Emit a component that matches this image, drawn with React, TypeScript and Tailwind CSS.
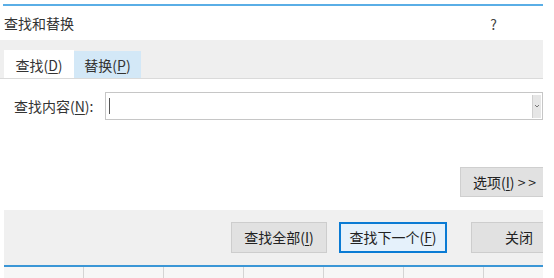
import React from 'react';

const font = { fontFamily: '"Microsoft YaHei", "Noto Sans CJK SC", "Noto Sans", sans-serif' };

function U({ children }: { children: React.ReactNode }) {
  return <span className="underline underline-offset-2">{children}</span>;
}

export default function App() {
  const cells = [0, 1, 2, 3, 4, 5, 6];

  return (
    <div className="w-[554px] h-[278px] bg-white overflow-hidden text-[14px] text-[#333]" style={font}>
      <div className="w-[543px] flex flex-col">
        <div className="h-[4px]" />
        <div className="h-[2px] bg-[#5aaee6] ml-[3px]" />

        {/* title bar */}
        <div className="h-[34px] flex items-center justify-between pl-[4px] pr-[46px]">
          <span className="text-[14px] leading-none">查找和替换</span>
          <span className="text-[14px] leading-none text-[#444] pt-[2px]">?</span>
        </div>

        {/* tabs */}
        <div className="h-[39px] bg-[#efefef] border-b border-[#dadada] flex items-end pl-[4px]">
          <div className="w-[70px] h-[28px] bg-white flex items-center justify-center pt-[2px]">
            查找(<U>D</U>)
          </div>
          <div className="w-[67px] h-[27px] bg-[#d3e8f7] flex items-center justify-center pt-[1px]">
            替换(<U>P</U>)
          </div>
        </div>

        {/* find row */}
        <div className="mt-[13px] flex items-center">
          <span className="w-[105px] pl-[14px]">查找内容(<U>N</U>):</span>
          <div className="flex-1 h-[28px] border border-[#c6c6c6] flex items-center">
            <div className="ml-[3px] w-px h-[16px] bg-[#555]" />
            <div className="ml-auto mr-px w-[9px] h-[23px] bg-[#e6e6e6] border-l border-[#d0d0d0] flex items-center justify-center">
              <svg width="6" height="6" viewBox="0 0 6 6">
                <path d="M1 2 L3 4 L5 2" stroke="#777" strokeWidth="1" fill="none" />
              </svg>
            </div>
          </div>
        </div>

        {/* options */}
        <div className="mt-[47px] flex justify-end">
          <button className="w-[83px] h-[30px] bg-[#e1e1e1] border border-[#cfcfcf] border-r-0 flex items-center pl-[12px] text-[#222] whitespace-nowrap">
            选项(<U>I</U>)&nbsp;&gt;&thinsp;&gt;
          </button>
        </div>

        {/* footer */}
        <div className="mt-[13px] ml-[4px] h-[55px] bg-[#f0f0f0] flex items-center pl-[227px]">
          <button className="w-[96px] h-[31px] bg-[#e1e1e1] border border-[#cdcdcd] flex items-center justify-center text-[#222]">
            查找全部(<U>I</U>)
          </button>
          <button className="ml-[12px] w-[108px] h-[31px] bg-[#e5f1fb] border-2 border-[#0a7bd4] flex items-center justify-center text-[#222]">
            查找下一个(<U>F</U>)
          </button>
          <button className="ml-[24px] flex-1 h-[31px] bg-[#e1e1e1] border border-[#cdcdcd] border-r-0 flex items-center justify-end pr-[10px] text-[#222]">
            关闭
          </button>
        </div>
        <div className="ml-[4px] h-[2px] bg-[#3b96d6]" />

        {/* sheet below */}
        <div className="ml-[4px] h-[12px] bg-[#f6f6f6] flex">
          {cells.map(i => (
            <div key={i} className="w-[80px] h-full border-r border-[#d4d4d4] shrink-0" />
          ))}
        </div>
      </div>
    </div>
  );
}
